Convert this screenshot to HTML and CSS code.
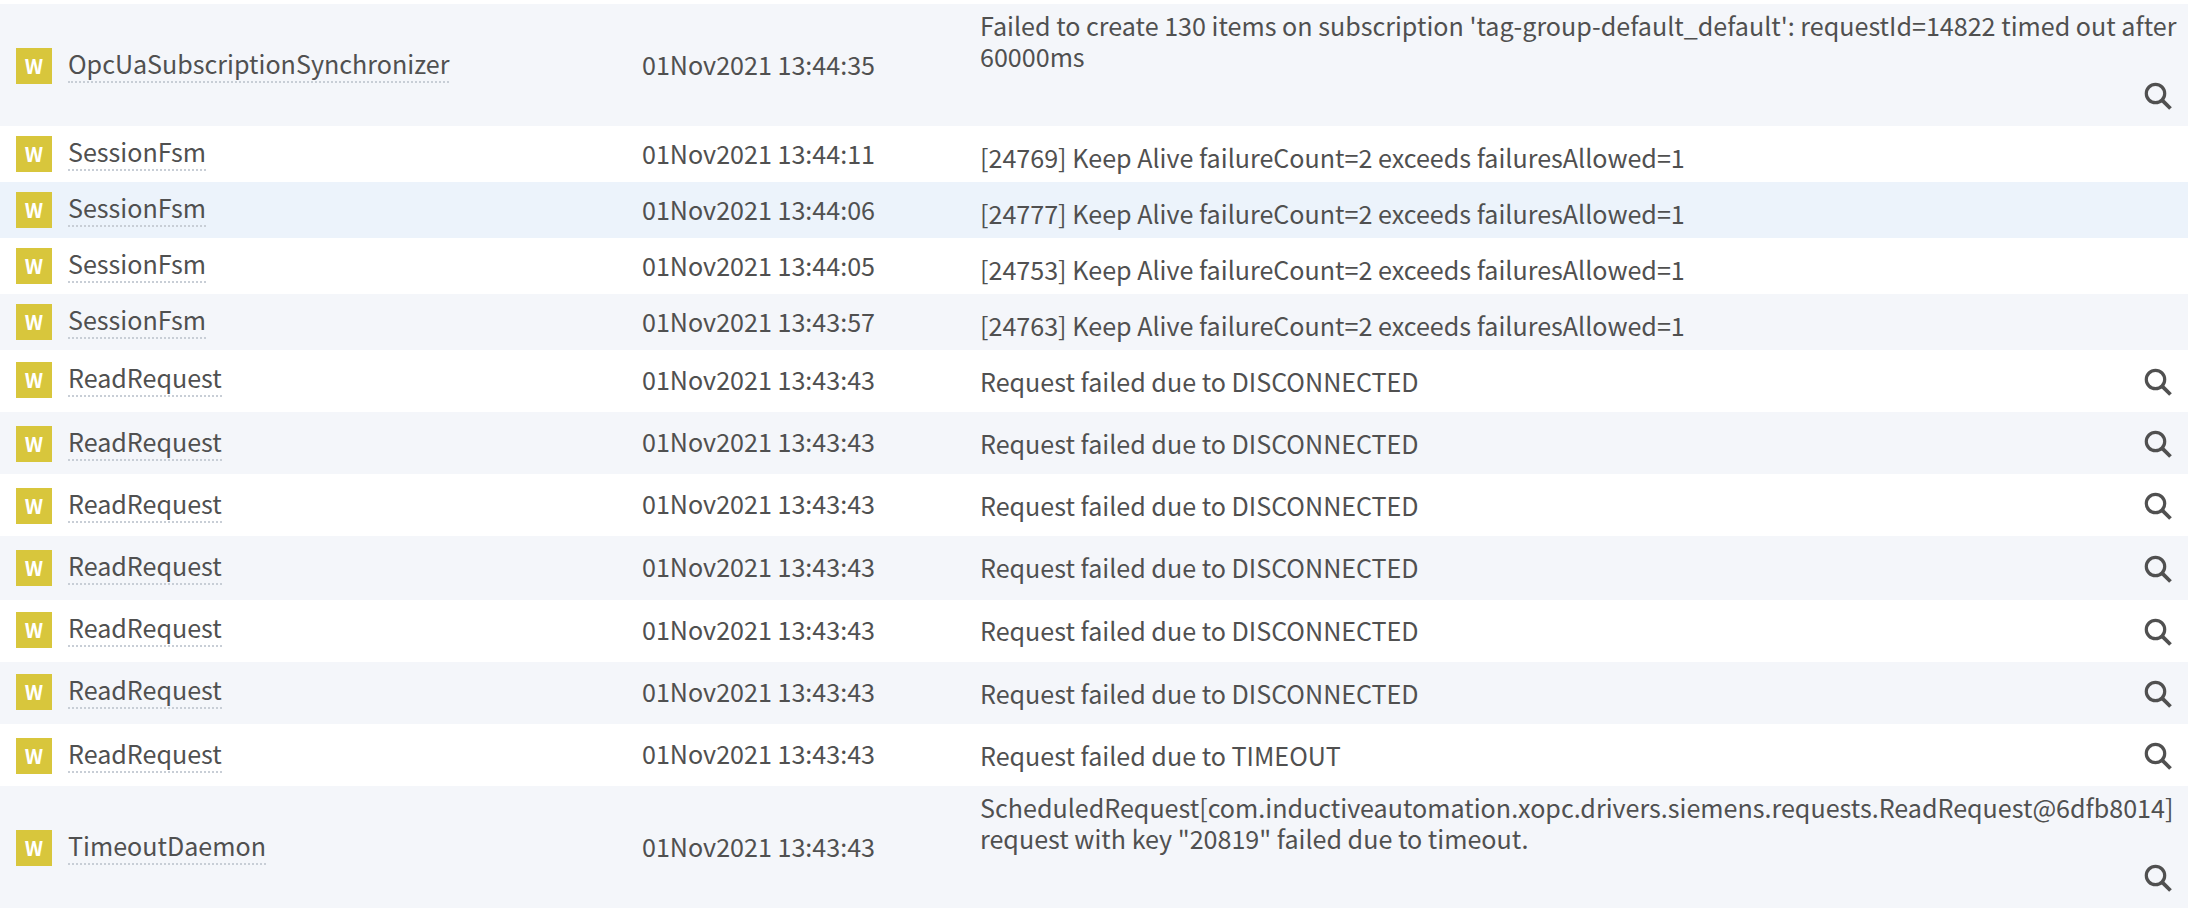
FILE: index.html
```html
<!DOCTYPE html>
<html lang="en">
<head>
<meta charset="utf-8">
<title>Logs</title>
<link rel="stylesheet" href="styles.css">
</head>
<body>
<svg class="defs" width="0" height="0" aria-hidden="true"><symbol id="mag" viewBox="0 0 28 28"><circle cx="11.5" cy="11.5" r="9.2" fill="none" stroke="currentColor" stroke-width="3.2"/><path d="M17.8 17.8l8.7 8.7" fill="none" stroke="currentColor" stroke-width="3.8"/></symbol></svg>
<div class="log">
  <div class="row tall alt"><div class="lvl">W</div><div class="name"><span>OpcUaSubscriptionSynchronizer</span></div><div class="time">01Nov2021 13:44:35</div><div class="msg"><div class="txt">Failed to create 130 items on subscription 'tag-group-default_default': requestId=14822 timed out after 60000ms</div><svg class="ico"><use href="#mag"/></svg></div></div>
  <div class="row short"><div class="lvl">W</div><div class="name"><span>SessionFsm</span></div><div class="time">01Nov2021 13:44:11</div><div class="msg"><div class="txt">[24769] Keep Alive failureCount=2 exceeds failuresAllowed=1</div></div></div>
  <div class="row short hi"><div class="lvl">W</div><div class="name"><span>SessionFsm</span></div><div class="time">01Nov2021 13:44:06</div><div class="msg"><div class="txt">[24777] Keep Alive failureCount=2 exceeds failuresAllowed=1</div></div></div>
  <div class="row short"><div class="lvl">W</div><div class="name"><span>SessionFsm</span></div><div class="time">01Nov2021 13:44:05</div><div class="msg"><div class="txt">[24753] Keep Alive failureCount=2 exceeds failuresAllowed=1</div></div></div>
  <div class="row short alt"><div class="lvl">W</div><div class="name"><span>SessionFsm</span></div><div class="time">01Nov2021 13:43:57</div><div class="msg"><div class="txt">[24763] Keep Alive failureCount=2 exceeds failuresAllowed=1</div></div></div>
  <div class="row up"><div class="lvl">W</div><div class="name"><span>ReadRequest</span></div><div class="time">01Nov2021 13:43:43</div><div class="msg"><div class="txt">Request failed due to DISCONNECTED</div><svg class="ico"><use href="#mag"/></svg></div></div>
  <div class="row dn alt"><div class="lvl">W</div><div class="name"><span>ReadRequest</span></div><div class="time">01Nov2021 13:43:43</div><div class="msg"><div class="txt">Request failed due to DISCONNECTED</div><svg class="ico"><use href="#mag"/></svg></div></div>
  <div class="row dn"><div class="lvl">W</div><div class="name"><span>ReadRequest</span></div><div class="time">01Nov2021 13:43:43</div><div class="msg"><div class="txt">Request failed due to DISCONNECTED</div><svg class="ico"><use href="#mag"/></svg></div></div>
  <div class="row wide alt"><div class="lvl">W</div><div class="name"><span>ReadRequest</span></div><div class="time">01Nov2021 13:43:43</div><div class="msg"><div class="txt">Request failed due to DISCONNECTED</div><svg class="ico"><use href="#mag"/></svg></div></div>
  <div class="row up lift"><div class="lvl">W</div><div class="name"><span>ReadRequest</span></div><div class="time">01Nov2021 13:43:43</div><div class="msg"><div class="txt">Request failed due to DISCONNECTED</div><svg class="ico"><use href="#mag"/></svg></div></div>
  <div class="row up alt"><div class="lvl">W</div><div class="name"><span>ReadRequest</span></div><div class="time">01Nov2021 13:43:43</div><div class="msg"><div class="txt">Request failed due to DISCONNECTED</div><svg class="ico"><use href="#mag"/></svg></div></div>
  <div class="row dn"><div class="lvl">W</div><div class="name"><span>ReadRequest</span></div><div class="time">01Nov2021 13:43:43</div><div class="msg"><div class="txt">Request failed due to TIMEOUT</div><svg class="ico"><use href="#mag"/></svg></div></div>
  <div class="row tall alt"><div class="lvl">W</div><div class="name"><span>TimeoutDaemon</span></div><div class="time">01Nov2021 13:43:43</div><div class="msg"><div class="txt">ScheduledRequest[com.inductiveautomation.xopc.drivers.siemens.requests.ReadRequest@6dfb8014] request with key "20819" failed due to timeout.</div><svg class="ico"><use href="#mag"/></svg></div></div>
</div>
</body>
</html>
```
FILE: styles.css
```css
html, body { margin: 0; background: #fff; }
body {
  padding: 4px 16px 12px 0;
  font-family: "Noto Sans CJK SC", "Noto Sans", sans-serif;
  font-size: 25.1px;
  color: #505050;
}
.defs { position: absolute; }
.row {
  display: grid;
  grid-template-columns: 68px 574px 338px 1fr;
  align-items: center;
  height: 62px;
}
.row.wide { height: 64px; }
.row.short { height: 56px; }
.row.tall { height: 122px; }
.alt { background: #f4f6fa; }
.hi { background: #ecf3fb; }
.lvl {
  width: 36px;
  height: 36px;
  margin-left: 16px;
  background: #d8c63c;
  color: #fff;
  font-weight: 700;
  font-size: 20px;
  line-height: 36px;
  text-align: center;
}
.tall .lvl, .dn .lvl { margin-top: 2px; }
.up .lvl { margin-bottom: 2px; }
.name { padding-bottom: 4px; }
.tall .name { padding-bottom: 2px; }
.up .name { padding-bottom: 6px; }
.dn .name { padding-bottom: 2px; }
.name span {
  display: inline-block;
  line-height: 28px;
  padding-bottom: 4px;
  border-bottom: 2px dotted #c8ced6;
}
.time { line-height: 30px; padding-bottom: 5px; }
.short .time, .tall .time { padding-bottom: 3px; }
.msg {
  display: flex;
  flex-direction: column;
  justify-content: center;
  position: relative;
  line-height: 31px;
}
.short .msg { padding-top: 6px; }
.tall .msg { align-self: stretch; justify-content: flex-start; padding-top: 6px; }
.wide .txt, .lift .txt { padding-bottom: 2px; }
.ico {
  position: absolute;
  right: 16px;
  top: 50%;
  width: 28px;
  height: 28px;
  margin-top: -13px;
  color: #505050;
}
.tall .ico { top: auto; bottom: 16px; margin-top: 0; }
```
